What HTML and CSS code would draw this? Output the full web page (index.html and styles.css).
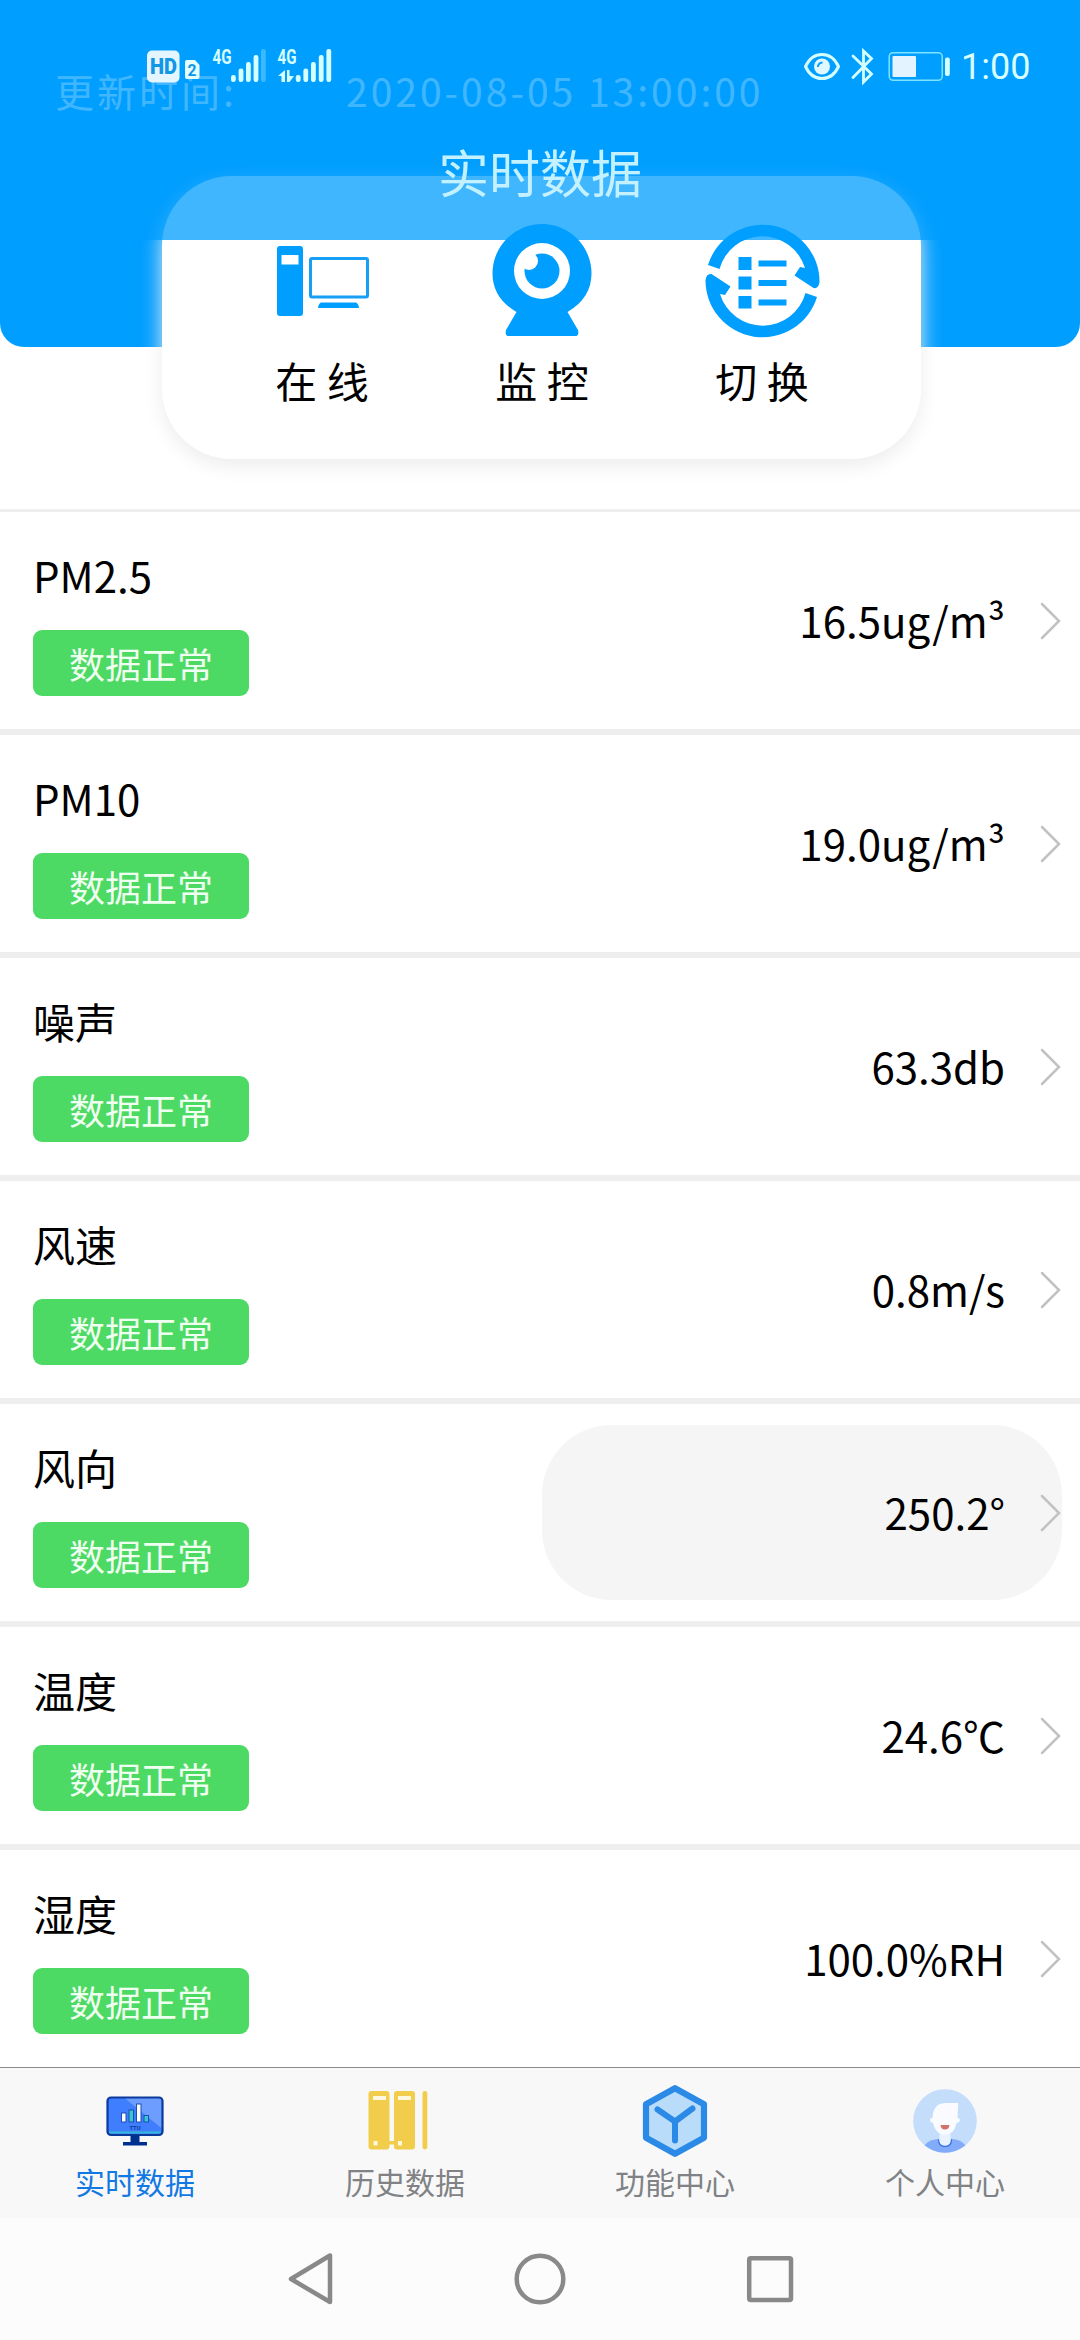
FILE: index.html
```html
<!DOCTYPE html>
<html lang="zh-CN">
<head>
<meta charset="utf-8">
<title>实时数据</title>
<link rel="stylesheet" href="styles.css">
</head>
<body>
<div class="screen">
  <header class="topbar">
    <div class="status">
      <svg class="status-left" width="185" height="36" viewBox="147 48 185 36">
        <rect x="147" y="50.500" width="32.500" height="32" rx="5" fill="#e3f5ff"/>
        <text x="150" y="74" class="hd" textLength="27" lengthAdjust="spacingAndGlyphs">HD</text>
        <path d="M187 60h8l4.500 5v12a2 2 0 0 1-2 2H187a2 2 0 0 1-2-2V62a2 2 0 0 1 2-2z" fill="#e3ffff"/>
        <text x="187.500" y="76" class="sim" textLength="9" lengthAdjust="spacingAndGlyphs">2</text>
        <g fill="#d5ffff">
          <text x="212.500" y="64" class="net" textLength="19" lengthAdjust="spacingAndGlyphs">4G</text>
          <rect x="231" y="75" width="4.800" height="7" rx="2.200"/>
          <rect x="238.600" y="68.500" width="4.800" height="13.500" rx="2.200"/>
          <rect x="246" y="62" width="4.800" height="20" rx="2.200"/>
          <rect x="253.600" y="55" width="4.800" height="27" rx="2.200"/>
          <rect x="261" y="49" width="4.800" height="33" rx="2.200" opacity=".28"/>
          <text x="277.500" y="64" class="net" textLength="19" lengthAdjust="spacingAndGlyphs">4G</text>
          <path d="M285 70v12h-3.500v-6H278zM287 70h2.500v6l4.500 0-4.500 6H287z"/>
          <rect x="295.800" y="75" width="4.800" height="7" rx="2.200"/>
          <rect x="303.400" y="68.500" width="4.800" height="13.500" rx="2.200"/>
          <rect x="311" y="62" width="4.800" height="20" rx="2.200"/>
          <rect x="318.800" y="55" width="4.800" height="27" rx="2.200"/>
          <rect x="326.400" y="49" width="4.800" height="33" rx="2.200"/>
        </g>
      </svg>
      <div class="status-right">
        <svg width="147" height="36" viewBox="804 48 147 36">
          <path d="M805.500 66.500C809 59 815 54.500 822 54.500s13 4.500 16.500 12C835 74 829 78.500 822 78.500s-13-4.500-16.500-12z" fill="none" stroke="#d5ffff" stroke-width="3"/>
          <circle cx="822" cy="66.500" r="8" fill="#e0f7ff"/>
          <path d="M818 67a4.500 4.500 0 0 1 4.500-4.500" fill="none" stroke="#009eff" stroke-width="2"/>
          <path d="M853 56l18.500 18L863.500 82V51l8 7.500L853 77.500" fill="none" stroke="#d5ffff" stroke-width="2.800" stroke-linecap="round"/>
          <rect x="889.200" y="52.700" width="53" height="27.600" rx="4" fill="none" stroke="#7fe3ff" stroke-width="1.500"/>
          <rect x="892.500" y="56" width="23.500" height="21" rx="1" fill="#e3f3ff"/>
          <rect x="945" y="57.500" width="4.800" height="18.500" rx="2" fill="#d5ffff"/>
        </svg>
        <span class="clock">1:00</span>
      </div>
    </div>
    <h1 class="title">实时数据</h1>
  </header>

  <section class="hero">
    <div class="updated"><span class="updated-label">更新时间:</span><span>2020-08-05 13:00:00</span></div>
  </section>

  <nav class="card">
    <a class="action">
      <svg width="116" height="112" viewBox="-58 -57 116 112">
        <g fill="#009eff">
          <path d="M-42-35h20a3 3 0 0 1 3 3v64a3 3 0 0 1-3 3h-20a3 3 0 0 1-3-3v-64a3 3 0 0 1 3-3zm1.500 9v9.500h17v-9.500z" fill-rule="evenodd"/>
          <path d="M-1 21.500h35q2.500 1 3 5.500H-4q.500-4.500 3-5.500z"/>
        </g>
        <rect x="-11.500" y="-22.500" width="57" height="38.500" rx="1.500" fill="none" stroke="#169ff5" stroke-width="3"/>
      </svg>
      <span>在 线</span>
    </a>
    <a class="action">
      <svg width="116" height="112" viewBox="483 224 116 112">
        <path d="M515.500 312Q491.500 298 491.500 273.500a49.500 49.500 0 0 1 99 0Q590.500 298 566.500 312l10.500 18q1.500 6-3 6H508q-4.500 0-3-6z" fill="#009eff"/>
        <circle cx="541" cy="271" r="28" fill="#fff"/>
        <circle cx="541" cy="271" r="17.500" fill="#009eff"/>
        <circle cx="528" cy="261" r="9" fill="#fff"/>
      </svg>
      <span>监 控</span>
    </a>
    <a class="action">
      <svg width="116" height="112" viewBox="-58.500 -57 116 112">
        <defs><path id="half" d="M-54.500-16A57 57 0 0 1 57 1Q56 8 51 7L32-5.500 37.500-14l5 1A44.500 44.500 0 0 0-43-12z"/></defs>
        <g fill="#009eff">
          <use href="#half"/><use href="#half" transform="rotate(180)"/>
          <path d="M-24-24h13v13h-13zM-24-4.500h13v13h-13zM-24 15h13v12.500h-13z"/>
          <path d="M-4-20.500h28v6h-28zM-4-1h28v6h-28zM-4 18.500h28v6h-28z"/>
        </g>
      </svg>
      <span>切 换</span>
    </a>
  </nav>

  <main class="list">
    <section class="row"><div class="info"><h2>PM2.5</h2><span class="tag">数据正常</span></div><div class="value"><span>16.5ug/m³</span><svg class="chevron" viewBox="0 0 22 38"><path d="M2 2l17 17L2 36"/></svg></div></section>
    <section class="row"><div class="info"><h2>PM10</h2><span class="tag">数据正常</span></div><div class="value"><span>19.0ug/m³</span><svg class="chevron" viewBox="0 0 22 38"><path d="M2 2l17 17L2 36"/></svg></div></section>
    <section class="row"><div class="info"><h2>噪声</h2><span class="tag">数据正常</span></div><div class="value"><span>63.3db</span><svg class="chevron" viewBox="0 0 22 38"><path d="M2 2l17 17L2 36"/></svg></div></section>
    <section class="row"><div class="info"><h2>风速</h2><span class="tag">数据正常</span></div><div class="value"><span>0.8m/s</span><svg class="chevron" viewBox="0 0 22 38"><path d="M2 2l17 17L2 36"/></svg></div></section>
    <section class="row"><div class="info"><h2>风向</h2><span class="tag">数据正常</span></div><div class="value pressed"><span>250.2°</span><svg class="chevron" viewBox="0 0 22 38"><path d="M2 2l17 17L2 36"/></svg></div></section>
    <section class="row"><div class="info"><h2>温度</h2><span class="tag">数据正常</span></div><div class="value"><span>24.6℃</span><svg class="chevron" viewBox="0 0 22 38"><path d="M2 2l17 17L2 36"/></svg></div></section>
    <section class="row"><div class="info"><h2>湿度</h2><span class="tag">数据正常</span></div><div class="value"><span>100.0%RH</span><svg class="chevron" viewBox="0 0 22 38"><path d="M2 2l17 17L2 36"/></svg></div></section>
  </main>

  <nav class="tabs">
    <a class="tab active">
      <svg width="72" height="72" viewBox="99 2085 72 72">
        <rect x="107.500" y="2097.500" width="55" height="37.500" rx="3.500" fill="#3f7fff"/>
        <path d="M124 2097.500h36a2.500 2.500 0 0 1 2.500 2.500v29z" fill="#6c9dff"/>
        <path d="M109 2132.500h52" stroke="#37b8d8" stroke-width="2.200"/>
        <rect x="107.500" y="2097.500" width="55" height="37.500" rx="3.500" fill="none" stroke="#0b3a9c" stroke-width="2.200"/>
        <path d="M130.500 2135h9v7h-9zM123 2142h24v3.500h-24z" fill="#00308f"/>
        <g stroke="#1d4fb0" stroke-width="1">
          <rect x="121.500" y="2113" width="4.500" height="9" fill="#fff"/>
          <rect x="129" y="2110" width="4.500" height="12" fill="#35c8d0"/>
          <rect x="136.500" y="2104" width="4.500" height="18" fill="#fff"/>
          <rect x="144" y="2115.500" width="4.500" height="6.500" fill="#35c8d0"/>
        </g>
        <text x="129.500" y="2129.500" class="ttu" textLength="11" lengthAdjust="spacingAndGlyphs">TTU</text>
      </svg>
      <span>实时数据</span>
    </a>
    <a class="tab">
      <svg width="72" height="72" viewBox="369 2085 72 72">
        <g fill="#f2cd4b">
          <rect x="368.500" y="2091" width="21" height="58.500" rx="3"/>
          <rect x="394" y="2091" width="21" height="58.500" rx="3"/>
          <rect x="389" y="2141" width="6" height="3.500"/>
          <rect x="422.500" y="2091" width="4.800" height="58.500" rx="2.400"/>
        </g>
        <path d="M373 2096h13v4h-13zM398 2096h13v4h-13zM373.500 2141h4v4.500h-4zM398 2141h4v4.500h-4z" fill="#fff8df"/>
      </svg>
      <span>历史数据</span>
    </a>
    <a class="tab">
      <svg width="72" height="72" viewBox="639 2085 72 72">
        <path d="M675 2088.200l29 16v33.600l-29 16-29-16v-33.600z" fill="#badcfb" stroke="#2b8ae6" stroke-width="6.200" stroke-linejoin="round"/>
        <path d="M657.500 2109.500l17.500 12 17.500-13M675 2121v19.500" fill="none" stroke="#2b8ae6" stroke-width="6" stroke-linecap="round" stroke-linejoin="round"/>
      </svg>
      <span>功能中心</span>
    </a>
    <a class="tab">
      <svg width="72" height="72" viewBox="909 2085 72 72">
        <circle cx="945" cy="2121" r="31.800" fill="#c3ddfb"/>
        <path d="M924.500 2145.300Q930 2139 939 2139h12q9 0 14.500 6.300a31.800 31.800 0 0 1-41 0z" fill="#82abfa"/>
        <path d="M938.500 2139q0 7.500 6.500 7.500t6.500-7.500" fill="#f8fbff" stroke="#3f78e6" stroke-width="1.400"/>
        <path d="M939.500 2130h11v10q-1 5-5.500 5t-5.500-5z" fill="#e9f3ff"/>
        <path d="M932.500 2118q-3 0-2.500 2.700.5 2 3 2.300Q935.500 2134.500 945 2134.500t11.500-11.500q3-.3 3.300-2.300.2-2.700-2.300-2.700l.7-15H946q-13 0-13.500 15z" fill="#f9fbff"/>
        <path d="M940.500 2125h9q-.5 4.500-4.500 4.500t-4.500-4.500z" fill="#d2746d"/>
      </svg>
      <span>个人中心</span>
    </a>
  </nav>

  <footer class="sysnav">
    <svg width="52" height="56" viewBox="282 2251 52 56"><path d="M328 2255.500v46.500L289 2279z"/></svg>
    <svg width="56" height="56" viewBox="512 2251 56 56"><circle cx="540" cy="2279" r="23.300"/></svg>
    <svg width="52" height="56" viewBox="743 2251 52 56"><rect x="748.200" y="2258.200" width="41.800" height="41.800" rx="1.500"/></svg>
  </footer>
</div>
</body>
</html>
```
FILE: styles.css
```css
* { box-sizing: border-box; }
body {
  margin: 0;
  background: #fff;
  color: #000;
  font-family: "Noto Sans CJK SC", sans-serif;
}
h1, h2 { margin: 0; font-weight: 400; }
svg { display: block; flex: none; overflow: visible; }

.screen {
  position: relative;
  display: flex;
  flex-direction: column;
  width: 1080px;
  height: 2340px;
  overflow: hidden;
}

/* translucent title bar that floats over the scrolled page */
.topbar {
  position: absolute;
  top: 0;
  left: 0;
  z-index: 2;
  width: 1080px;
  height: 240px;
  padding-top: 48px;
  background: rgba(0, 158, 255, .75);
}
.status {
  display: flex;
  justify-content: space-between;
  height: 36px;
  padding: 0 50px 0 147px;
}
.status-right { display: flex; gap: 10px; }
.clock {
  width: 69px;
  color: #d9ffff;
  font: 36px/39px Roboto, sans-serif;
  white-space: nowrap;
}
.hd { font: 900 22px Roboto, sans-serif; fill: #1297e6; }
.sim { font: 700 17px Roboto, sans-serif; fill: #1297e6; }
.net { font: 700 20px Roboto, sans-serif; }
.title {
  margin-top: 52px;
  color: #c4f1ff;
  font-size: 51px;
  line-height: 70px;
  text-align: center;
}

.hero {
  flex: none;
  height: 347px;
  padding: 60px 55px 0;
  background: #009eff;
  border-radius: 0 0 24px 24px;
}
.updated {
  display: flex;
  color: #fff;
  font-size: 39px;
  line-height: 60px;
  letter-spacing: 3px;
  white-space: nowrap;
}
.updated-label { width: 291px; }

.card {
  flex: none;
  display: grid;
  grid-template-columns: repeat(3, 220px);
  justify-content: center;
  width: 759px;
  height: 283px;
  margin: -171px 0 50px 162px;
  padding: 48px 0 0 1px;
  background: #fff;
  border-radius: 70px;
  box-shadow: 0 7px 20px #ededed;
}
.action {
  display: flex;
  flex-direction: column;
  align-items: center;
  gap: 14px;
  font-size: 42px;
  line-height: 60px;
}

.list {
  flex: none;
  height: 1558px;
  border-top: 3px solid #eee;
}
.row {
  display: flex;
  justify-content: space-between;
  align-items: flex-start;
  height: 223px;
  padding: 21px 18px 0 33px;
  border-bottom: 6px solid #eee;
}
.row:last-child { border-bottom: 0; height: 217px; }
.info { padding-top: 12px; }
.info h2 {
  margin-bottom: 25px;
  font-size: 42px;
  line-height: 60px;
}
.tag {
  display: block;
  width: 216px;
  height: 66px;
  border-radius: 9px;
  background: #4cd964;
  color: #effff0;
  font-size: 36px;
  line-height: 66px;
  text-align: center;
}
.value {
  display: flex;
  justify-content: flex-end;
  align-items: center;
  gap: 35px;
  width: 520px;
  height: 175px;
  border-radius: 70px;
  font-size: 42px;
  line-height: 60px;
}
.value span { margin-top: -2px; }
.pressed { background: #f5f5f5; }
.chevron {
  width: 22px;
  height: 38px;
  fill: none;
  stroke: #c2c2c2;
  stroke-width: 2.5;
  stroke-linecap: round;
}

.tabs {
  flex: none;
  display: grid;
  grid-template-columns: repeat(4, 1fr);
  height: 151px;
  border-top: 1px solid #8a8a8a;
  background: #f8f8f8;
}
.tab {
  display: flex;
  flex-direction: column;
  align-items: center;
  gap: 4px;
  padding-top: 17px;
  color: #808285;
  font-size: 30px;
  line-height: 40px;
}
.active { color: #1278e3; }
.ttu { font: 700 6px Roboto, sans-serif; fill: #0b3a9c; }

.sysnav {
  flex: 1;
  display: flex;
  justify-content: center;
  align-items: center;
  gap: 176px;
  background: #fcfcfc;
  fill: none;
  stroke: #898989;
  stroke-width: 4.5;
  stroke-linejoin: round;
}
```
